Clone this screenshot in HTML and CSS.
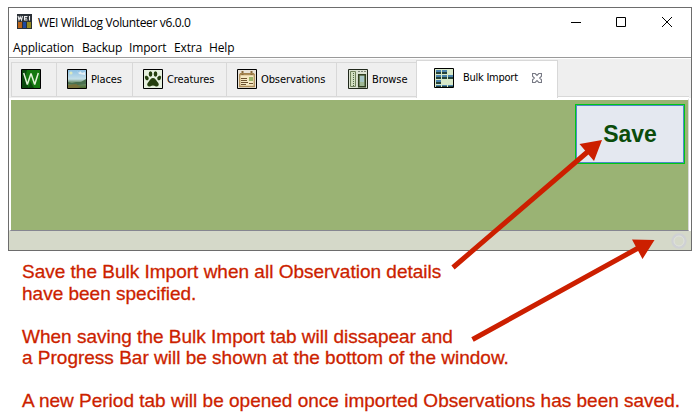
FILE: index.html
```
<!DOCTYPE html>
<html lang="en">
<head>
<meta charset="utf-8">
<title>WEI WildLog Volunteer</title>
<link rel="stylesheet" href="styles.css">
</head>
<body>
<div class="window">
  <header class="titlebar">
    <svg class="logo" width="15" height="15" viewBox="0 0 15 15">
      <path fill="#2a3036" d="M0 0h15v15H0z"/><path fill="#b9641a" d="M1 8h4v6H1z"/><path fill="#1d48a0" d="M6 8h3v6H6z"/><path fill="#958a20" d="M10 8h4v6h-4z"/>
      <path fill="none" stroke="#eee" stroke-width="1.100" d="M1 2l1 4 1.200-3 1.300 3 1-4M10.500 2.500H7.500v3.500h3M7.500 4.200h2.500M12.500 2v4.500"/>
    </svg>
    <span class="title">WEI WildLog Volunteer v6.0.0</span>
    <svg class="controls" width="102" height="12" viewBox="0 0 102 12" fill="none" stroke="#000">
      <path d="M0 6.500h10M45.500 1.500h9v9h-9zM91 1l10 10M101 1L91 11"/>
    </svg>
  </header>
  <nav class="menu"><span class="m1">Application</span><span class="m2">Backup</span><span class="m3">Import</span><span class="m4">Extra</span><span class="m5">Help</span></nav>
  <div class="tabs">
    <div class="tab home">
      <svg width="20" height="20" viewBox="0 0 20 20"><path fill="#14780f" stroke="#000" d="M.5.500h19v19H.5z"/><path fill="#0b480d" d="M1 1h5L4 10l4 9H1zM9 12l4 7H8z"/><path fill="none" stroke="#e2f2d8" stroke-width="1.500" stroke-linejoin="bevel" d="M2.700 4l3.600 11.500L10 4.500l3.700 11L17.300 4"/></svg>
    </div>
    <div class="tab places">
      <svg width="20" height="20" viewBox="0 0 20 20"><defs><linearGradient id="sky" x2="0" y2="1"><stop stop-color="#8bbfe4"/><stop offset=".5" stop-color="#c4dfe8"/><stop offset=".65" stop-color="#7a9c80"/><stop offset="1" stop-color="#48672c"/></linearGradient></defs><path fill="url(#sky)" stroke="#000" d="M.5.500h19v19H.5z"/><path fill="#e4edf3" d="M10 2l2 2 1-2 2 2 3-1v3l-6-1z"/><circle cx="4" cy="4" r="1.600" fill="#dce9c0"/><path fill="#4a7050" d="M1 13l4 1 4-1 5 0 5-3v5l-8 1-10-1z"/><path fill="#77713a" d="M1 16l8-1 5 3-4 1H1z"/></svg>
      <span>Places</span>
    </div>
    <div class="tab creatures">
      <svg width="20" height="20" viewBox="0 0 20 20"><path fill="#e7f1df" stroke="#000" d="M.5.500h19v19H.5z"/><g fill="#26400f"><ellipse cx="3.800" cy="9" rx="1.800" ry="2.400" transform="rotate(-25 3.800 9)"/><ellipse cx="7.500" cy="5" rx="1.800" ry="2.700"/><ellipse cx="12.500" cy="5" rx="1.800" ry="2.700"/><ellipse cx="16.200" cy="9" rx="1.800" ry="2.400" transform="rotate(25 16.200 9)"/><path d="M10 9c2 0 3 2 4.500 4 2 2 1.500 4-.5 4.500-1.500.3-2-1-4-1s-2.500 1.300-4 1c-2-.5-2.500-2.500-.5-4.500C7 11 8 9 10 9z"/></g></svg>
      <span>Creatures</span>
    </div>
    <div class="tab observations">
      <svg width="20" height="20" viewBox="0 0 20 20"><path fill="#e9e3d8" stroke="#000" d="M.5.500h19v19H.5z"/><path fill="#f6e9c4" stroke="#ae8e59" stroke-width="1.300" d="M2.700 5.500h14.600v12H2.700z"/><path stroke="#8a6b3c" stroke-width="2" d="M5.500 2v4M14.500 2v4"/><path stroke="#a5844f" d="M3 4.500h14"/><path stroke="#6c512f" d="M4 9.500h6M4 11.500h6M4 13.500h7M4 15.500h5M12 14.500h4"/><path fill="#9cb468" d="M12 8h4v4h-4z"/></svg>
      <span>Observations</span>
    </div>
    <div class="tab browse">
      <svg width="20" height="20" viewBox="0 0 20 20"><path fill="#dbe2d2" stroke="#20281b" d="M.5.500h19v19H.5z"/><path fill="#d2dfc0" stroke="#71825c" d="M2.500 2.500h5v15h-5z"/><path fill="none" stroke="#51664a" stroke-dasharray="1 1" d="M5.500 4v13"/><path fill="none" stroke="#7d8579" stroke-dasharray="2 1" d="M10 2.500h9"/><path fill="#9fb994" stroke="#303f20" stroke-width="1.500" d="M10.700 5.700h6.600v12h-6.600z"/><path fill="#a5c5c5" d="M12 7h4v6h-4z"/></svg>
      <span>Browse</span>
    </div>
    <div class="tab bulk">
      <svg width="20" height="20" viewBox="0 0 20 20"><path fill="#d8e9c9" stroke="#000" d="M.5.500h19v19H.5z"/><path fill="#4b83ad" d="M2 2h5v4H2zM8 2h5v4H8zM2 7h5v4H2zM8 7h5v4H8zM14 7h5v4h-5zM2 12h5v4H2zM2 17h5v2H2zM8 17h5v2H8zM14 17h5v2h-5z"/><path fill="#254239" d="M2 4h5v2H2zM8 4h5v2H8zM2 9h5v2H2zM8 9h5v2H8zM14 9h5v2h-5zM2 14h5v2H2zM2 18h5v1H2zM8 18h5v1H8zM14 18h5v1h-5z"/></svg>
      <span>Bulk Import</span>
      <svg class="close" width="10" height="10" viewBox="0 0 11 11"><path fill="#fff" stroke="#777984" stroke-width="1.200" d="M.6.600h2.900l2 2 2-2h2.900v2.900l-2 2 2 2v2.900H7.500l-2-2-2 2H.6V7.500l2-2-2-2z"/></svg>
    </div>
    <div class="rest"></div>
  </div>
  <main class="panel"><button class="save">Save</button></main>
  <footer class="status"><svg width="16" height="16" viewBox="0 0 16 16" fill="none"><circle cx="8" cy="8" r="6.400" stroke="#cfd1d4" stroke-width="2.500"/><circle cx="8" cy="8" r="5" stroke="#e1e3df" stroke-width=".8"/></svg></footer>
</div>
<section class="notes">
  <p>Save the Bulk Import when all Observation details<br>have been specified.</p>
  <p>When saving the Bulk Import tab will dissapear and<br>a Progress Bar will be shown at the bottom of the window.</p>
  <p>A new Period tab will be opened once imported Observations has been saved.</p>
</section>
<svg class="arrows" width="700" height="420" viewBox="0 0 700 420">
  <g stroke="#cc1f00" stroke-width="5"><path d="M453 267.500L588 151.500M472.500 339.500L641 246.500"/></g>
  <path fill="#cc1f00" d="M602 140l-22.500 4L594 161zM654.500 240l-22.500-.5 10.500 19.500z"/>
</svg>
</body>
</html>
```
FILE: styles.css
```
* { box-sizing: border-box; }
body { margin: 0; width: 700px; height: 420px; overflow: hidden; background: #fff; font-family: "Liberation Sans", sans-serif; }
.window { margin: 7px 0 0 8px; width: 684px; height: 244px; border: 1px solid #6d6d6d; display: flex; flex-direction: column; background: #fff; }
.titlebar { height: 30px; display: flex; align-items: center; padding: 0 18px 0 8px; font: 12px/16px "Open Sans", sans-serif; color: #000; }
.logo { margin-top: -3px; }
.title { margin-left: 6px; margin-top: 1px; letter-spacing: -.36px; }
.controls { margin-left: auto; margin-top: -2px; }
.menu { height: 20px; border-bottom: 1px solid #9a9a9a; display: flex; padding-left: 4px; font: 12px/19px "Open Sans", sans-serif; letter-spacing: -.15px; color: #000; }
.menu span { white-space: nowrap; }
.m1 { width: 69px; }
.m2 { width: 47px; }
.m3 { width: 45px; }
.m4 { width: 35px; }
.tabs { height: 39px; margin-top: 1px; padding-left: 2px; background: #efefef; display: flex; align-items: flex-end; font: 11px/16px "DejaVu Sans Condensed", sans-serif; letter-spacing: -.1px; color: #000; }
.tab { height: 35px; margin-bottom: 1px; display: flex; align-items: center; border: 1px solid #d8d8d8; border-right: 0; padding-left: 9px; white-space: nowrap; }
.tab span { margin-left: 4px; margin-top: 1px; }
.home { width: 45px; }
.places { width: 76px; padding-left: 10px; }
.creatures { width: 94px; padding-left: 10px; }
.observations { width: 110px; padding-left: 10px; }
.browse { width: 80px; padding-left: 11px; }
.bulk { width: 142px; height: 38px; margin-bottom: 0; background: #fff; border-right: 1px solid #d8d8d8; border-bottom: 0; padding: 0 0 2px 17px; }
.tab.bulk span { margin-left: 9px; margin-top: 0; letter-spacing: -.25px; }
.close { margin-left: auto; margin-right: 15px; }
.rest { width: 131px; height: 2px; border-top: 1px solid #d8d8d8; background: #fff; }
.panel { height: 134px; border-left: 2px solid #fff; border-right: 1px solid #d8d8d8; border-top: 2px solid #fff; border-bottom: 1px solid #868691; margin-right: 2px; background: #9ab374; display: flex; justify-content: flex-end; padding: 4px 3px 0 0; }
.save { width: 110px; height: 60px; border: 1px solid #00c716; padding: 0; background: #e4e8f0; box-shadow: inset 0 0 0 1px #4d8ac6; color: #0b4c0b; font: bold 23px/26px "Liberation Sans", sans-serif; }
.status { height: 19px; background: #d5d9c9; display: flex; justify-content: flex-end; align-items: center; padding-right: 4px; }
.notes { padding: 10px 0 0 22px; color: #cc1f00; font-size: 19px; line-height: 21.500px; white-space: nowrap; -webkit-text-stroke: .3px #cc1f00; }
.notes p { margin: 0 0 21.500px; }
.arrows { position: absolute; left: 0; top: 0; pointer-events: none; }
```
